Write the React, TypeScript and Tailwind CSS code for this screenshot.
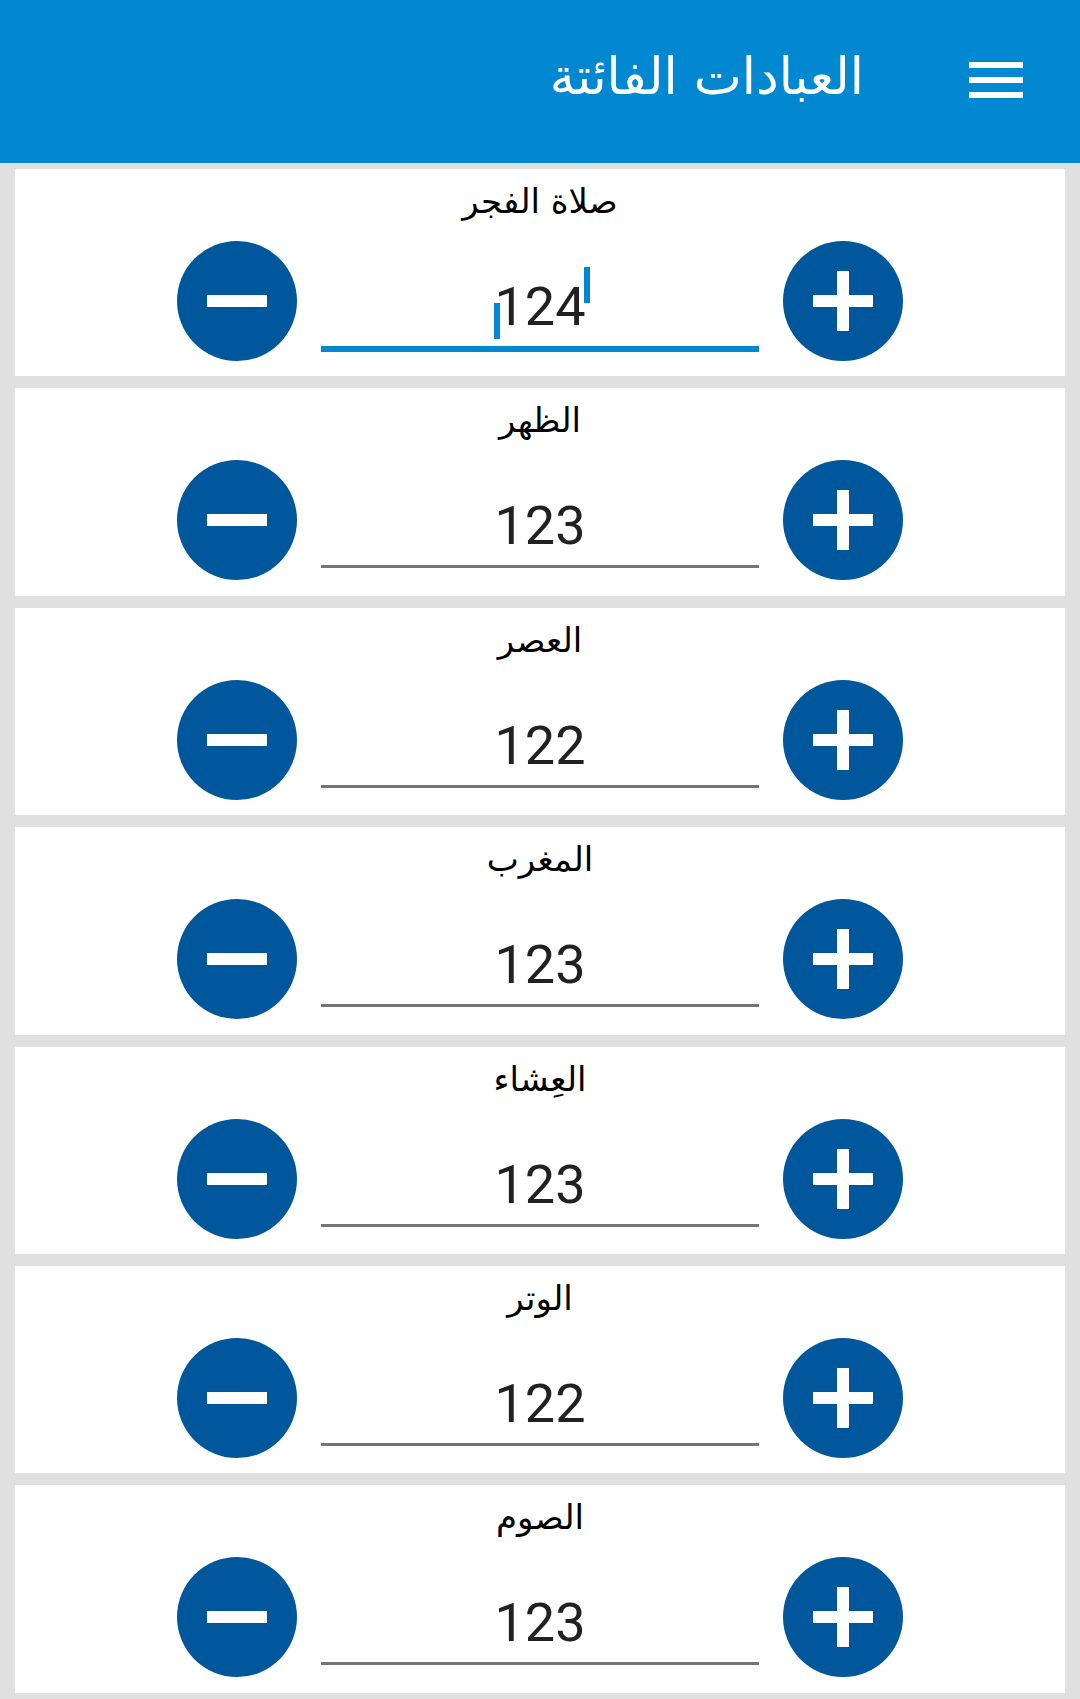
import React from "react";

const items = [
  { label: "صلاة الفجر", value: "124", focused: true },
  { label: "الظهر", value: "123" },
  { label: "العصر", value: "122" },
  { label: "المغرب", value: "123" },
  { label: "العِشاء", value: "123" },
  { label: "الوتر", value: "122" },
  { label: "الصوم", value: "123" },
];

function MinusButton() {
  return (
    <div className="w-[120px] h-[120px] rounded-full bg-[#01579b] flex items-center justify-center shrink-0">
      <div className="w-[60px] h-[12px] bg-white" />
    </div>
  );
}

function PlusButton() {
  return (
    <div className="relative w-[120px] h-[120px] rounded-full bg-[#01579b] flex items-center justify-center shrink-0">
      <div className="w-[60px] h-[12px] bg-white" />
      <div className="absolute w-[12px] h-[60px] bg-white" />
    </div>
  );
}

function Card({ label, value, focused }: { label: string; value: string; focused?: boolean }) {
  return (
    <div className="h-[207.4px] bg-white flex flex-col items-center">
      <div
        className="h-[72px] w-full flex justify-center pt-[8px] text-[34px] leading-[48px] text-black"
        style={{ fontFamily: '"DejaVu Sans", sans-serif' }}
        dir="rtl"
      >
        {label}
      </div>
      <div className="flex items-start gap-[24px] h-[120px]">
        <MinusButton />
        <div className="relative w-[438px] h-[120px] pt-[34px]">
          <div
            className="h-[64px] leading-[64px] text-[54px] text-center text-[#212121]"
            style={{ fontFamily: "Roboto, sans-serif" }}
          >
            {value}
          </div>
          <div className={focused ? "mt-[7px] h-[6px] bg-[#0288d1]" : "mt-[7px] h-[3px] bg-[#757575]"} />
          {focused && (
            <>
              <div className="absolute left-[173px] top-[62px] w-[6px] h-[36px] bg-[#0288d1]" />
              <div className="absolute left-[263px] top-[26px] w-[6px] h-[36px] bg-[#0288d1]" />
            </>
          )}
        </div>
        <PlusButton />
      </div>
    </div>
  );
}

export default function App() {
  return (
    <div className="w-[1080px] min-h-[1699px] bg-[#e0e0e0]">
      <div className="h-[163px] bg-[#0288d1] flex items-center justify-end">
        <div
          className="text-white text-[51px] leading-[64px] pb-[10px]"
          style={{ fontFamily: '"DejaVu Sans", sans-serif' }}
          dir="rtl"
        >
          العبادات الفائتة
        </div>
        <div className="w-[216px] flex justify-end pr-[57px]">
          <div className="flex flex-col gap-[9px] pb-[4px]">
            <div className="w-[54px] h-[6px] bg-white" />
            <div className="w-[54px] h-[6px] bg-white" />
            <div className="w-[54px] h-[6px] bg-white" />
          </div>
        </div>
      </div>
      <div className="flex flex-col gap-[12px] px-[15px] py-[6px]">
        {items.map((it) => (
          <Card key={it.label} {...it} />
        ))}
      </div>
    </div>
  );
}
